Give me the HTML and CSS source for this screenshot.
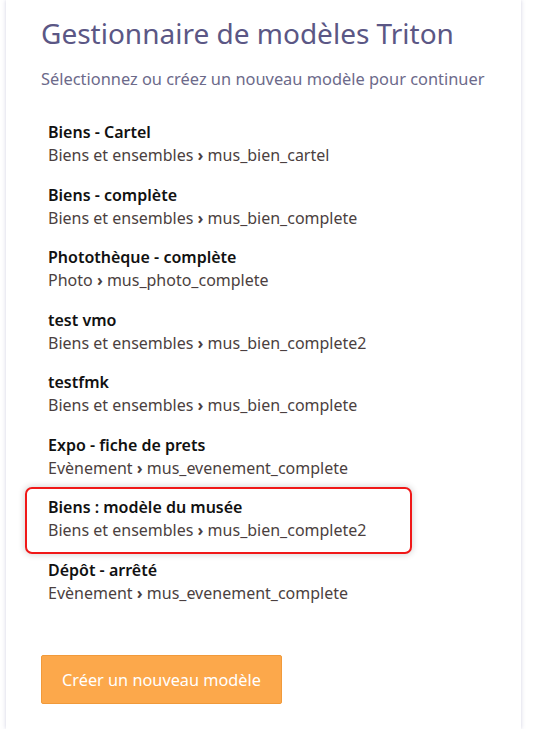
FILE: index.html
```html
<!DOCTYPE html>
<html lang="fr">
<head>
    <meta charset="UTF-8">
    <meta name="viewport" content="width=device-width, initial-scale=1.0">
    <title>Gestionnaire de modèles Triton</title>
    <link rel="stylesheet" href="styles.css">
</head>
<body>
    <div class="panel">
        <h1>Gestionnaire de modèles Triton</h1>
        <p class="intro">Sélectionnez ou créez un nouveau modèle pour continuer</p>

        <ul class="model-list">
            <li class="model">
                <span class="model-name">Biens - Cartel</span>
                <span class="model-path">Biens et ensembles <span class="chevron">&#x203A;</span> mus_bien_cartel</span>
            </li>
            <li class="model">
                <span class="model-name">Biens - complète</span>
                <span class="model-path">Biens et ensembles <span class="chevron">&#x203A;</span> mus_bien_complete</span>
            </li>
            <li class="model">
                <span class="model-name">Photothèque - complète</span>
                <span class="model-path">Photo <span class="chevron">&#x203A;</span> mus_photo_complete</span>
            </li>
            <li class="model">
                <span class="model-name">test vmo</span>
                <span class="model-path">Biens et ensembles <span class="chevron">&#x203A;</span> mus_bien_complete2</span>
            </li>
            <li class="model">
                <span class="model-name">testfmk</span>
                <span class="model-path">Biens et ensembles <span class="chevron">&#x203A;</span> mus_bien_complete</span>
            </li>
            <li class="model">
                <span class="model-name">Expo - fiche de prets</span>
                <span class="model-path">Evènement <span class="chevron">&#x203A;</span> mus_evenement_complete</span>
            </li>
            <li class="model selected">
                <span class="model-name">Biens : modèle du musée</span>
                <span class="model-path">Biens et ensembles <span class="chevron">&#x203A;</span> mus_bien_complete2</span>
            </li>
            <li class="model">
                <span class="model-name">Dépôt - arrêté</span>
                <span class="model-path">Evènement <span class="chevron">&#x203A;</span> mus_evenement_complete</span>
            </li>
        </ul>

        <button class="create-btn">Créer un nouveau modèle</button>
    </div>
</body>
</html>
```

FILE: styles.css
```css
* {
    margin: 0;
    padding: 0;
    box-sizing: border-box;
    font-family: 'Noto Sans', 'Open Sans', sans-serif;
}

body {
    background: #fff;
    overflow: hidden;
}

.panel {
    margin-left: 6px;
    width: 515px;
    min-height: 729px;
    padding: 14px 0 0 35px;
    background: #fff;
    box-shadow: 0 0 4px rgba(120, 120, 170, 0.35);
}

h1 {
    color: #5b5785;
    font-size: 28px;
    font-weight: 400;
    line-height: 38px;
}

.intro {
    margin-top: 16px;
    color: #6c6a8a;
    font-size: 16.4px;
    line-height: 22px;
}

.model-list {
    list-style: none;
    margin: 23px 0 0 -15px;
    width: 385px;
}

.model {
    display: flex;
    flex-direction: column;
    padding: 8px 22px 8.5px;
    border-radius: 6px;
}

.model-name {
    color: #111;
    font-size: 16px;
    font-weight: 600;
    line-height: 23px;
}

.model-path {
    color: #4b3f40;
    font-size: 16px;
    line-height: 23px;
}

.chevron {
    font-weight: 700;
}

.model.selected {
    padding-bottom: 11px;
    margin-bottom: -2.5px;
    outline: 2px solid #f01818;
    outline-offset: -1px;
    box-shadow: 0 0 6px 2px rgba(0, 0, 0, 0.16);
}

.create-btn {
    margin-top: 42px;
    width: 241px;
    height: 49px;
    border: 1px solid #f19a3a;
    border-radius: 2px;
    background: #fca84b;
    color: #fff;
    font-size: 16.3px;
    cursor: pointer;
}
```
